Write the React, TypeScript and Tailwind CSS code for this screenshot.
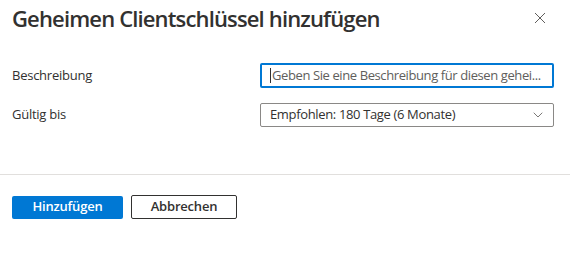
import { ChevronDown } from "lucide-react";

export default function App() {
  return (
    <div
      className="w-[570px] h-[262px] bg-white text-[#323130] overflow-hidden"
      style={{ fontFamily: '"Open Sans", "Noto Sans", sans-serif' }}
    >
      {/* Header */}
      <div className="flex items-center justify-between pl-3 pr-[24px] h-[36px]">
        <h1 className="text-[22px] font-semibold tracking-[-0.85px] leading-none">
          Geheimen Clientschlüssel hinzufügen
        </h1>
        <svg width="12" height="12" viewBox="0 0 12 12" className="text-[#605e5c]">
          <path d="M1 1 L11 11 M11 1 L1 11" stroke="currentColor" strokeWidth="1" />
        </svg>
      </div>

      {/* Form */}
      <div className="flex flex-col gap-[15px] pl-3 pr-4 mt-[27px] text-[13px]">
        <div className="flex items-center">
          <label className="w-[248px] tracking-[-0.25px]">Beschreibung</label>
          <div className="w-[294px] h-[25px] border-2 border-[#0078d4] rounded-[2px] flex items-center pl-[8px] pr-2">
            <span className="w-px h-[15px] bg-[#323130] mr-[1px] shrink-0" />
            <span className="whitespace-nowrap text-[#605e5c] tracking-[-0.4px]">
              Geben Sie eine Beschreibung für diesen gehei...
            </span>
          </div>
        </div>
        <div className="flex items-center">
          <label className="w-[248px] tracking-[-0.25px]">Gültig bis</label>
          <div className="w-[294px] h-[24px] border border-[#8a8886] rounded-[2px] flex items-center justify-between pl-[9px] pr-[7px]">
            <span className="tracking-[-0.35px]">Empfohlen: 180 Tage (6 Monate)</span>
            <ChevronDown size={16} strokeWidth={1.25} className="text-[#605e5c]" />
          </div>
        </div>
      </div>

      {/* Divider */}
      <div className="mt-[47px] h-px bg-[#e1dfdd]" />

      {/* Footer */}
      <div className="flex items-center gap-2 pl-3 mt-[20px] text-[13px] font-semibold">
        <button className="w-[111px] h-[23px] bg-[#0078d4] text-white rounded-[2px] tracking-[-0.2px]">
          Hinzufügen
        </button>
        <button className="w-[106px] h-[24px] border border-[#323130] rounded-[2px] bg-white tracking-[-0.2px]">
          Abbrechen
        </button>
      </div>
    </div>
  );
}
